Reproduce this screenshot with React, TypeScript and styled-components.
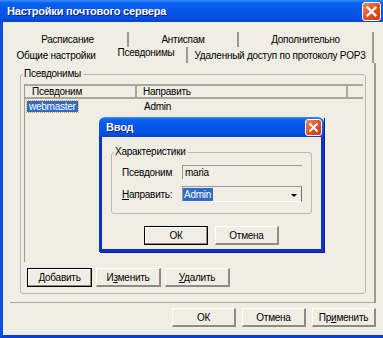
import styled, { createGlobalStyle } from "styled-components";

const GlobalStyle = createGlobalStyle`
  html, body {
    margin: 0;
    padding: 0;
    background: #efede4;
  }
  body {
    font-family: "Liberation Sans", Arial, sans-serif;
    font-size: 10px;
    letter-spacing: -0.25px;
    color: #000;
  }
`;

const Window = styled.div`
  position: relative;
  width: 383px;
  height: 338px;
  display: flex;
  flex-direction: column;
  background: #efede4;
  overflow: hidden;
`;

const TitleBar = styled.div<{ $height: number; $rounded?: boolean }>`
  height: ${(p) => p.$height}px;
  flex: none;
  display: flex;
  align-items: center;
  justify-content: space-between;
  padding: 0 2px 0 7px;
  color: #fff;
  font-weight: bold;
  font-size: 11px;
  letter-spacing: -0.2px;
  text-shadow: 1px 1px 0 #0a1f80;
  background: linear-gradient(
    to bottom,
    #3d8ff9 0px,
    #0b5fee 3px,
    #0558e8 45%,
    #0552e2 80%,
    #0843c6 100%
  );
  border-radius: ${(p) => (p.$rounded ? "6px 6px 0 0" : "0")};
`;

const CloseButton = styled.div<{ $size: number }>`
  width: ${(p) => p.$size}px;
  height: ${(p) => p.$size}px;
  box-sizing: border-box;
  border: 1px solid #fff;
  border-radius: 3px;
  background: linear-gradient(135deg, #f08a5c 0%, #e25427 50%, #c63d14 100%);
  display: flex;
  align-items: center;
  justify-content: center;
`;

const Body = styled.div`
  flex: 1;
  display: flex;
  flex-direction: column;
  border-left: 3px solid #0a4fe0;
  border-bottom: 3px solid #0a3fcf;
  padding: 10px 7px 0 5px;
`;

const TabRow = styled.div<{ $height: number }>`
  display: flex;
  height: ${(p) => p.$height}px;
`;

const Tab = styled.div<{ $w: number; $active?: boolean; $sep?: boolean }>`
  width: ${(p) => p.$w}px;
  box-sizing: border-box;
  display: flex;
  align-items: center;
  justify-content: center;
  border-right: 2px solid ${(p) => (p.$sep ? "#9d998d" : "transparent")};
  padding-bottom: ${(p) => (p.$active ? 5 : 0)}px;
  white-space: nowrap;
`;

const Panel = styled.div`
  margin-left: 2px;
  width: 366px;
  height: 240px;
  box-sizing: border-box;
  border-right: 2px solid #9d998d;
  border-bottom: 1px solid #aaa799;
  padding: 5px 8px 0 10px;
`;

const Group = styled.fieldset<{ $height: number }>`
  margin: 0;
  height: ${(p) => p.$height}px;
  box-sizing: border-box;
  border: 1px solid #bcb9ad;
  border-radius: 3px;
  padding: 0 2px;
  min-width: 0;
`;

const Legend = styled.legend`
  padding: 0 2px 0 1px;
  line-height: 12px;
  margin-left: 0;
`;

const ListView = styled.div`
  margin-top: 4px;
  margin-left: 1px;
  height: 178px;
  border-left: 1px solid #9d998d;
`;

const ListHeader = styled.div`
  display: flex;
  height: 15px;
  box-sizing: border-box;
  border-top: 2px solid #aaa799;
  border-bottom: 2px solid #aaa799;
`;

const HeaderCell = styled.div<{ $w: number; $pad: number }>`
  width: ${(p) => p.$w}px;
  box-sizing: border-box;
  padding-left: ${(p) => p.$pad}px;
  border-right: 2px solid #aaa799;
  line-height: 11px;
`;

const ListRow = styled.div`
  display: flex;
  height: 13px;
  margin-top: 1px;
  align-items: center;
`;

const Cell = styled.div<{ $w: number; $pad: number }>`
  width: ${(p) => p.$w}px;
  box-sizing: border-box;
  padding-left: ${(p) => p.$pad}px;
`;

const Selected = styled.span`
  display: inline-block;
  background: #316ac5;
  color: #fff;
  padding: 0 2px;
  line-height: 11px;
  outline: 1px dotted #e8a030;
`;

const ButtonRow = styled.div<{ $gap: number; $justify: string }>`
  display: flex;
  gap: ${(p) => p.$gap}px;
  justify-content: ${(p) => p.$justify};
`;

const Button = styled.div<{ $default?: boolean; $w?: number }>`
  width: ${(p) => p.$w ?? 65}px;
  height: 19px;
  box-sizing: border-box;
  display: flex;
  align-items: center;
  justify-content: center;
  background: #efede4;
  border-top: 1px solid #fff;
  border-left: 1px solid #fff;
  border-right: 2px solid #8f8b80;
  border-bottom: 2px solid #8f8b80;
  ${(p) =>
    p.$default &&
    `
    border: 1px solid #000;
    box-shadow: inset -1px -1px 0 #8f8b80, inset 1px 1px 0 #fff;
  `}
`;

const PanelButtons = styled(ButtonRow)`
  margin: 6px 0 0 4px;
`;

const FooterButtons = styled(ButtonRow)`
  margin-top: 5px;
`;

const Dialog = styled.div`
  position: absolute;
  left: 99px;
  top: 117px;
  width: 225px;
  height: 135px;
  display: flex;
  flex-direction: column;
  box-shadow: 1px 1px 0 #0a1f80;
`;

const DialogBody = styled.div`
  flex: 1;
  background: #efede4;
  border: 3px solid #0b33cc;
  border-top: none;
  padding: 9px 9px 0 9px;
  display: flex;
  flex-direction: column;
`;

const FieldGrid = styled.div`
  display: grid;
  grid-template-columns: 60px 120px;
  grid-template-rows: 14px 16px;
  row-gap: 7px;
  align-items: center;
  padding: 7px 8px 0 8px;
`;

const TextInput = styled.div`
  height: 14px;
  box-sizing: border-box;
  border-top: 1px solid #9d998d;
  border-left: 1px solid #9d998d;
  padding-left: 2px;
  line-height: 13px;
`;

const Combo = styled.div`
  height: 16px;
  box-sizing: border-box;
  border-top: 1px solid #9d998d;
  border-left: 1px solid #9d998d;
  border-right: 1px solid #6f6c62;
  border-bottom: 1px solid #fff;
  display: flex;
  align-items: center;
  justify-content: space-between;
`;

const ComboValue = styled.span`
  background: #316ac5;
  color: #fff;
  line-height: 13px;
  padding: 0 2px 0 1px;
`;

const ComboArrow = styled.span`
  width: 0;
  height: 0;
  margin-right: 4px;
  margin-top: 3px;
  border-left: 3px solid transparent;
  border-right: 3px solid transparent;
  border-top: 3px solid #000;
`;

const DialogButtons = styled(ButtonRow)`
  margin-top: 12px;
`;

function CloseX({ size }: { size: number }) {
  return (
    <CloseButton $size={size}>
      <svg width={size - 6} height={size - 6} viewBox="0 0 10 10">
        <path d="M2 2 L8 8 M8 2 L2 8" stroke="#fff" strokeWidth="1.8" strokeLinecap="square" />
      </svg>
    </CloseButton>
  );
}

export default function App() {
  return (
    <>
      <GlobalStyle />
      <Window>
        <TitleBar $height={22}>
          <span>Настройки почтового сервера</span>
          <CloseX size={19} />
        </TitleBar>
        <Body>
          <TabRow $height={15}>
            <Tab $w={121} $sep>Расписание</Tab>
            <Tab $w={110} $sep>Антиспам</Tab>
            <Tab $w={135} $sep>Дополнительно</Tab>
          </TabRow>
          <TabRow $height={16}>
            <Tab $w={98}>Общие настройки</Tab>
            <Tab $w={82} $sep $active>Псевдонимы</Tab>
            <Tab $w={186} $sep>Удаленный доступ по протоколу POP3</Tab>
          </TabRow>
          <Panel>
            <Group $height={226}>
              <Legend>Псевдонимы</Legend>
              <ListView>
                <ListHeader>
                  <HeaderCell $w={112} $pad={7}>Псевдоним</HeaderCell>
                  <HeaderCell $w={211} $pad={6}>Направить</HeaderCell>
                </ListHeader>
                <ListRow>
                  <Cell $w={112} $pad={2}>
                    <Selected>webmaster</Selected>
                  </Cell>
                  <Cell $w={211} $pad={7}>Admin</Cell>
                </ListRow>
              </ListView>
              <PanelButtons $gap={4} $justify="flex-start">
                <Button $default>
                  <span><u>Д</u>обавить</span>
                </Button>
                <Button>
                  <span>И<u>з</u>менить</span>
                </Button>
                <Button>
                  <span><u>У</u>далить</span>
                </Button>
              </PanelButtons>
            </Group>
          </Panel>
          <FooterButtons $gap={6} $justify="flex-end">
            <Button $w={64}>ОК</Button>
            <Button $w={64}>Отмена</Button>
            <Button $w={64}>
              <span>Пр<u>и</u>менить</span>
            </Button>
          </FooterButtons>
        </Body>
        <Dialog>
          <TitleBar $height={20} $rounded>
            <span>Ввод</span>
            <CloseX size={17} />
          </TitleBar>
          <DialogBody>
            <Group $height={68}>
              <Legend>Характеристики</Legend>
              <FieldGrid>
                <span>Псевдоним</span>
                <TextInput>maria</TextInput>
                <span><u>Н</u>аправить:</span>
                <Combo>
                  <ComboValue>Admin</ComboValue>
                  <ComboArrow />
                </Combo>
              </FieldGrid>
            </Group>
            <DialogButtons $gap={7} $justify="center">
              <Button $w={64} $default>ОК</Button>
              <Button $w={64}>Отмена</Button>
            </DialogButtons>
          </DialogBody>
        </Dialog>
      </Window>
    </>
  );
}
